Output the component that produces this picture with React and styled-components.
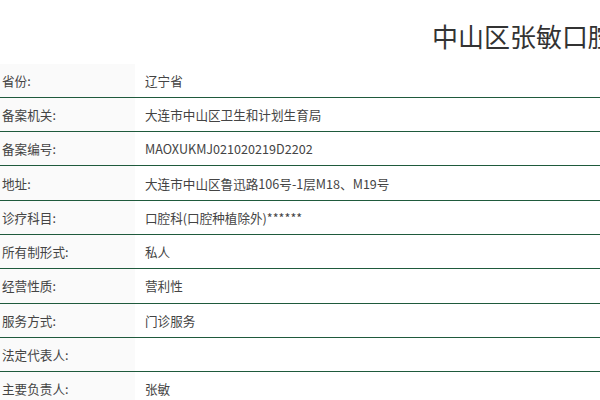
import React from "react";
import styled, { createGlobalStyle } from "styled-components";

const Global = createGlobalStyle`
  html, body { margin: 0; padding: 0; background: #fff; }
  body { font-family: "Noto Sans CJK SC", "Noto Sans", sans-serif; color: #333; overflow: hidden; }
`;

const Page = styled.div`
  width: 600px;
  height: 400px;
  overflow: hidden;
`;

const Header = styled.div`
  height: 63.5px;
  display: flex;
  align-items: center;
  padding-left: 432px;
  box-sizing: border-box;
  white-space: nowrap;
  overflow: hidden;
`;

const Title = styled.h1`
  margin: 0;
  font-size: 26px;
  font-weight: 400;
  color: #333;
  line-height: 1;
  padding-top: 9px;
`;

const Table = styled.div`
  display: flex;
  flex-direction: column;
`;

const Row = styled.div`
  display: grid;
  grid-template-columns: 135px 1fr;
  border-bottom: 1px solid #1f5a3c;
  height: 34.3px;
  box-sizing: border-box;
  font-size: 12.6px;
`;

const Label = styled.div`
  background: #fafafa;
  display: flex;
  align-items: center;
  padding-left: 2px;
  color: #444;
`;

const Value = styled.div`
  display: flex;
  align-items: center;
  padding-left: 10px;
  color: #444;
  white-space: nowrap;
`;

const rows = [
  ["省份:", "辽宁省"],
  ["备案机关:", "大连市中山区卫生和计划生育局"],
  ["备案编号:", "MAOXUKMJ021020219D2202"],
  ["地址:", "大连市中山区鲁迅路106号-1层M18、M19号"],
  ["诊疗科目:", "口腔科(口腔种植除外)******"],
  ["所有制形式:", "私人"],
  ["经营性质:", "营利性"],
  ["服务方式:", "门诊服务"],
  ["法定代表人:", ""],
  ["主要负责人:", "张敏"],
];

export default function App() {
  return (
    <Page>
      <Global />
      <Header>
        <Title>中山区张敏口腔诊所</Title>
      </Header>
      <Table>
        {rows.map(([l, v]) => (
          <Row key={l}>
            <Label>{l}</Label>
            <Value>{v}</Value>
          </Row>
        ))}
      </Table>
    </Page>
  );
}
